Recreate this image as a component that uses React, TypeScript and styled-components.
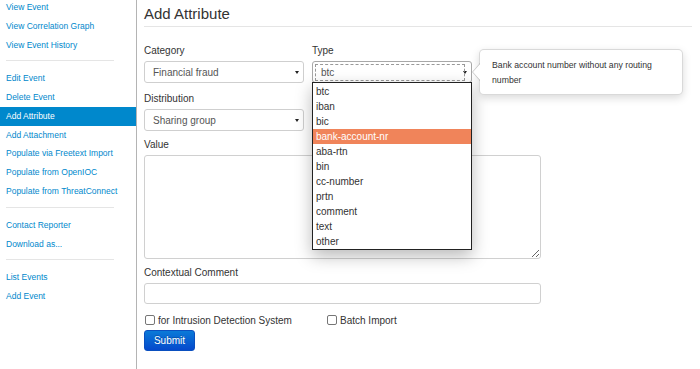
import React from "react";
import styled, { createGlobalStyle } from "styled-components";

const GlobalStyle = createGlobalStyle`
  body {
    margin: 0;
    background: #fff;
    font-family: "Liberation Sans", Arial, sans-serif;
    color: #333;
  }
`;

const Page = styled.div`
  display: flex;
  width: 700px;
  height: 369px;
  overflow: hidden;
`;

const Sidebar = styled.nav`
  width: 136px;
  flex-shrink: 0;
  border-right: 1px solid #b4b4b4;
`;

const NavList = styled.div`
  margin-top: -2.1px;
  display: flex;
  flex-direction: column;
`;

const NavItem = styled.a<{ $active?: boolean }>`
  display: block;
  height: 18.8px;
  line-height: 18.8px;
  padding: 0 6px;
  font-size: 8.5px;
  text-decoration: none;
  white-space: nowrap;
  color: ${(p) => (p.$active ? "#fff" : "#0088cc")};
  background: ${(p) => (p.$active ? "#0088cc" : "transparent")};
`;

const Divider = styled.div`
  height: 1px;
  background: #e5e5e5;
  margin: 6px 22px 8px 6px;
`;

const Main = styled.main`
  flex: 1;
  padding: 0 8px 0 7px;
`;

const Heading = styled.h2`
  margin: 4px 0 0;
  padding-bottom: 2px;
  font-size: 15px;
  line-height: 20px;
  font-weight: normal;
  color: #333;
  border-bottom: 1px solid #e5e5e5;
`;

const Row = styled.div<{ $top: number }>`
  display: flex;
  gap: 8px;
  margin-top: ${(p) => p.$top}px;
`;

const Field = styled.div`
  display: flex;
  flex-direction: column;
`;

const Label = styled.label`
  font-size: 10px;
  line-height: 14px;
  margin-bottom: 3px;
  color: #333;
`;

const SelectBox = styled.div<{ $focused?: boolean }>`
  position: relative;
  box-sizing: border-box;
  width: 160px;
  height: 22px;
  padding: 0 8px;
  display: flex;
  align-items: center;
  font-size: 10px;
  color: #555;
  background: #fff;
  border: 1px solid ${(p) => (p.$focused ? "#a8a8a8" : "#cfcfcf")};
  border-radius: 3px;
  &::after {
    content: "";
    display: ${(p) => (p.$focused ? "block" : "none")};
    position: absolute;
    inset: 2px 6px 1px 2px;
    border: 1px dashed #999;
  }
`;

const Caret = styled.span`
  position: absolute;
  right: 4px;
  top: 9px;
  width: 0;
  height: 0;
  border-left: 2px solid transparent;
  border-right: 2px solid transparent;
  border-top: 3px solid #222;
`;

const OptionList = styled.ul`
  position: absolute;
  top: 100%;
  left: -1px;
  z-index: 5;
  box-sizing: border-box;
  width: 160px;
  margin: 0;
  padding: 1px 0 0;
  list-style: none;
  background: #fff;
  border: 1px solid #222;
  box-shadow: 0 6px 16px rgba(0, 0, 0, 0.28);
`;

const Option = styled.li<{ $selected?: boolean }>`
  height: 15px;
  line-height: 15px;
  padding: 0 3px;
  font-size: 10px;
  color: ${(p) => (p.$selected ? "#fff" : "#333")};
  background: ${(p) => (p.$selected ? "#f0845a" : "transparent")};
`;

const Popover = styled.div`
  position: absolute;
  left: 166px;
  top: -13px;
  z-index: 6;
  box-sizing: border-box;
  width: 204px;
  padding: 8px 12px 6px;
  font-size: 8.7px;
  line-height: 15px;
  color: #333;
  background: #fff;
  border: 1px solid rgba(0, 0, 0, 0.15);
  border-radius: 5px;
  box-shadow: 0 3px 8px rgba(0, 0, 0, 0.15);
  &::before,
  &::after {
    content: "";
    position: absolute;
    width: 0;
    height: 0;
    border-style: solid;
  }
  &::before {
    left: -8px;
    top: 13px;
    border-width: 9px 8px 9px 0;
    border-color: transparent rgba(0, 0, 0, 0.2) transparent transparent;
  }
  &::after {
    left: -7px;
    top: 14px;
    border-width: 8px 7px 8px 0;
    border-color: transparent #fff transparent transparent;
  }
`;

const TextArea = styled.textarea`
  box-sizing: border-box;
  width: 397px;
  height: 104px;
  border: 1px solid #d0d0d0;
  border-radius: 3px;
  font-family: inherit;
  font-size: 10px;
  padding: 4px 6px;
  outline: none;
`;

const TextInput = styled.input`
  box-sizing: border-box;
  width: 397px;
  height: 21px;
  border: 1px solid #d0d0d0;
  border-radius: 3px;
  font-family: inherit;
  font-size: 10px;
  padding: 0 6px;
  outline: none;
`;

const Checks = styled.div`
  display: grid;
  grid-template-columns: 182px auto;
  margin-top: 9px;
  margin-left: 1px;
  height: 14px;
`;

const CheckItem = styled.label`
  display: flex;
  align-items: center;
  gap: 3px;
  font-size: 10px;
  color: #333;
`;

const CheckBox = styled.span`
  box-sizing: border-box;
  width: 10px;
  height: 10px;
  border: 1px solid #767676;
  border-radius: 2px;
  background: #fff;
`;

const SubmitButton = styled.button`
  box-sizing: border-box;
  width: 51px;
  height: 21px;
  margin-top: 3px;
  padding: 0;
  font-family: inherit;
  font-size: 10px;
  color: #fff;
  border: 1px solid #0a4fbf;
  border-radius: 3px;
  background: linear-gradient(to bottom, #0a7ad8, #0549cc);
  text-shadow: 0 -1px 0 rgba(0, 0, 0, 0.25);
`;

const Form = styled.div`
  display: flex;
  flex-direction: column;
  align-items: flex-start;
`;

const TypeField = styled(Field)`
  position: relative;
`;

const typeOptions = [
  "btc",
  "iban",
  "bic",
  "bank-account-nr",
  "aba-rtn",
  "bin",
  "cc-number",
  "prtn",
  "comment",
  "text",
  "other",
];

const App = () => {
  return (
    <Page>
      <GlobalStyle />
      <Sidebar>
        <NavList>
          <NavItem>View Event</NavItem>
          <NavItem>View Correlation Graph</NavItem>
          <NavItem>View Event History</NavItem>
          <Divider />
          <NavItem>Edit Event</NavItem>
          <NavItem>Delete Event</NavItem>
          <NavItem $active>Add Attribute</NavItem>
          <NavItem>Add Attachment</NavItem>
          <NavItem>Populate via Freetext Import</NavItem>
          <NavItem>Populate from OpenIOC</NavItem>
          <NavItem>Populate from ThreatConnect</NavItem>
          <Divider />
          <NavItem>Contact Reporter</NavItem>
          <NavItem>Download as...</NavItem>
          <Divider />
          <NavItem>List Events</NavItem>
          <NavItem>Add Event</NavItem>
        </NavList>
      </Sidebar>
      <Main>
        <Heading>Add Attribute</Heading>
        <Form>
          <Row $top={17}>
            <Field>
              <Label>Category</Label>
              <SelectBox>
                Financial fraud
                <Caret />
              </SelectBox>
            </Field>
            <TypeField>
              <Label>Type</Label>
              <SelectBox $focused>
                btc
                <Caret />
                <OptionList>
                  {typeOptions.map((o) => (
                    <Option key={o} $selected={o === "bank-account-nr"}>
                      {o}
                    </Option>
                  ))}
                </OptionList>
                <Popover>Bank account number without any routing number</Popover>
              </SelectBox>
            </TypeField>
          </Row>
          <Row $top={9}>
            <Field>
              <Label>Distribution</Label>
              <SelectBox>
                Sharing group
                <Caret />
              </SelectBox>
            </Field>
          </Row>
          <Row $top={7}>
            <Field>
              <Label>Value</Label>
              <TextArea />
            </Field>
          </Row>
          <Row $top={7}>
            <Field>
              <Label>Contextual Comment</Label>
              <TextInput />
            </Field>
          </Row>
          <Checks>
            <CheckItem>
              <CheckBox />
              for Intrusion Detection System
            </CheckItem>
            <CheckItem>
              <CheckBox />
              Batch Import
            </CheckItem>
          </Checks>
          <SubmitButton>Submit</SubmitButton>
        </Form>
      </Main>
    </Page>
  );
};

export default App;
